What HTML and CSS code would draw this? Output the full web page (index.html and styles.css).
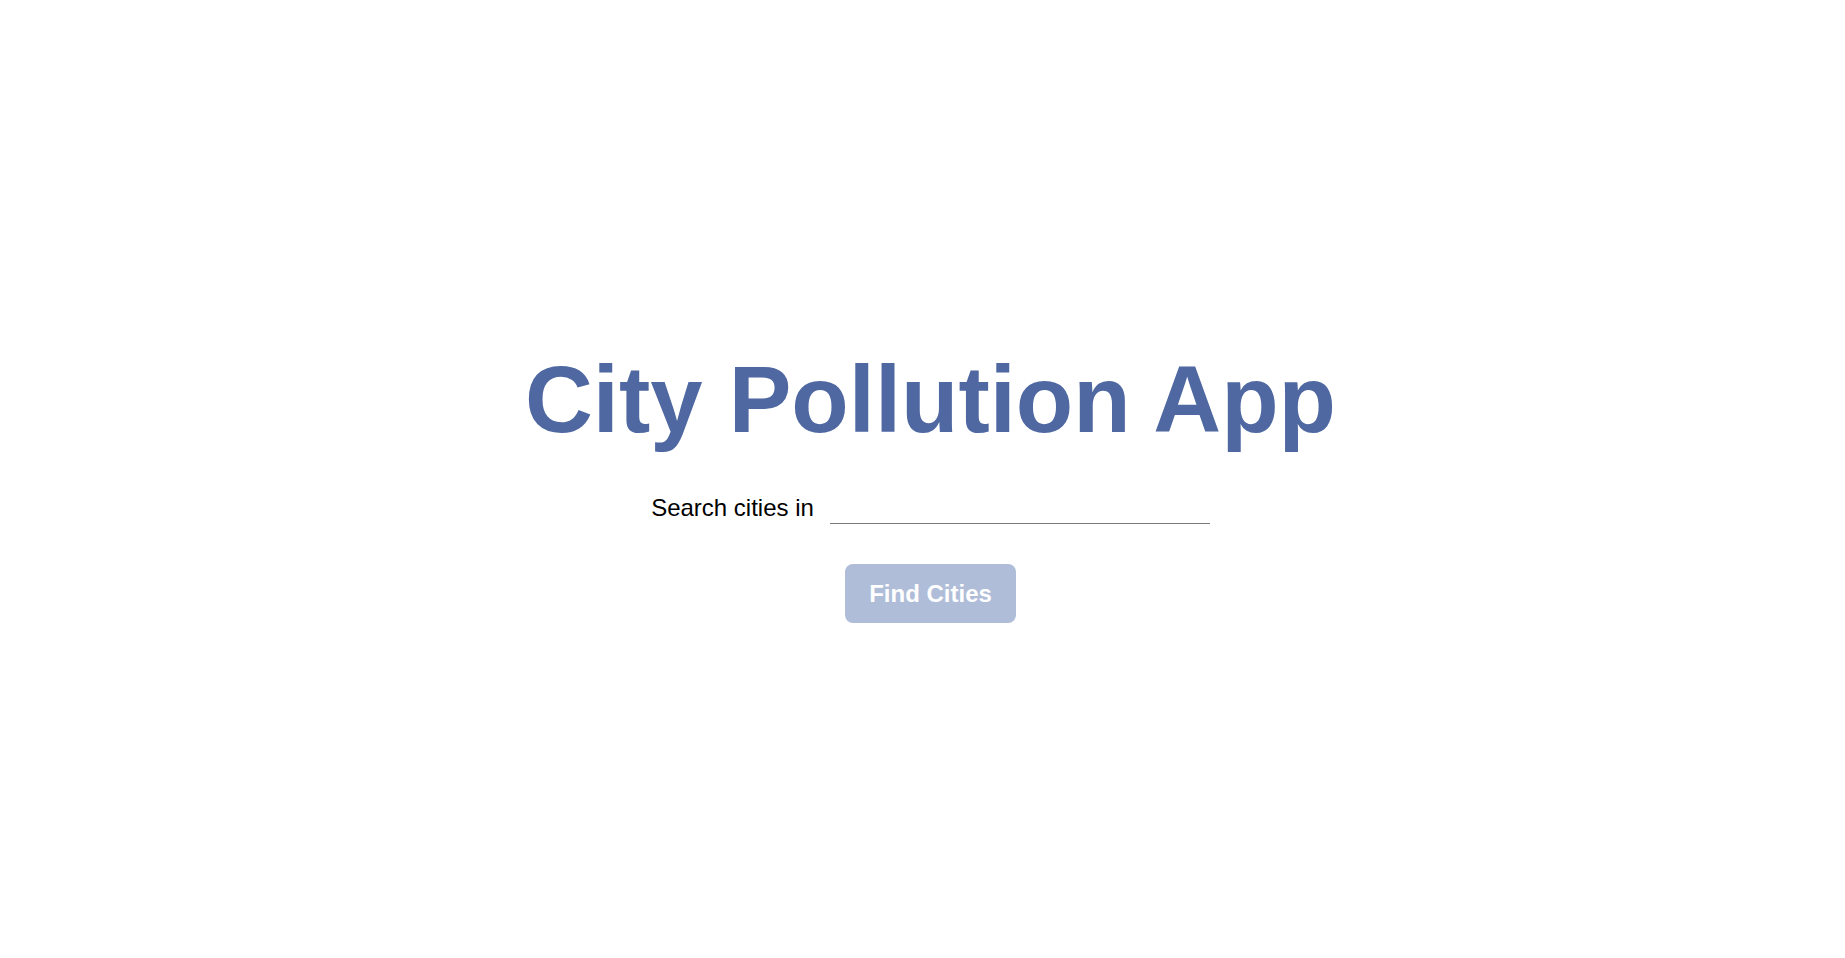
FILE: index.html
```html
<!DOCTYPE html>
<html lang="en">
<head>
<meta charset="utf-8">
<title>City Pollution App</title>
<link rel="stylesheet" href="styles.css">
</head>
<body>
<main class="page">
  <h1 class="title">City Pollution App</h1>
  <form class="search-form">
    <div class="search-row">
      <label class="search-label" for="country">Search cities in</label>
      <input class="search-input" id="country" type="text">
    </div>
    <button class="find-btn" type="button" disabled>Find Cities</button>
  </form>
</main>
</body>
</html>
```

FILE: styles.css
```css
html, body {
  margin: 0;
  padding: 0;
  background: #ffffff;
}

body {
  font-family: "Liberation Sans", Arial, sans-serif;
  color: #000000;
}

.page {
  display: flex;
  flex-direction: column;
  align-items: center;
  gap: 40px;
  padding: 346px 0 0 16px;
}

.title {
  margin: 0;
  font-size: 94px;
  font-weight: 700;
  line-height: normal;
  color: #4f68a2;
  text-align: center;
}

.search-form {
  display: flex;
  flex-direction: column;
  align-items: center;
  gap: 40px;
}

.search-row {
  display: flex;
  align-items: flex-end;
  gap: 16px;
}

.search-label {
  font-size: 24px;
  line-height: 28px;
  padding-bottom: 2px;
}

.search-input {
  box-sizing: border-box;
  width: 380px;
  height: 30px;
  border: none;
  border-bottom: 1px solid #7a7a7a;
  outline: none;
  padding: 0;
  font-family: "Liberation Sans", Arial, sans-serif;
  font-size: 24px;
  background: transparent;
}

.find-btn {
  border: none;
  border-radius: 8px;
  background: #afbdd8;
  color: #ffffff;
  font-family: "Liberation Sans", Arial, sans-serif;
  font-size: 24px;
  font-weight: 700;
  line-height: 27px;
  padding: 16px 24px;
  cursor: default;
}
```
